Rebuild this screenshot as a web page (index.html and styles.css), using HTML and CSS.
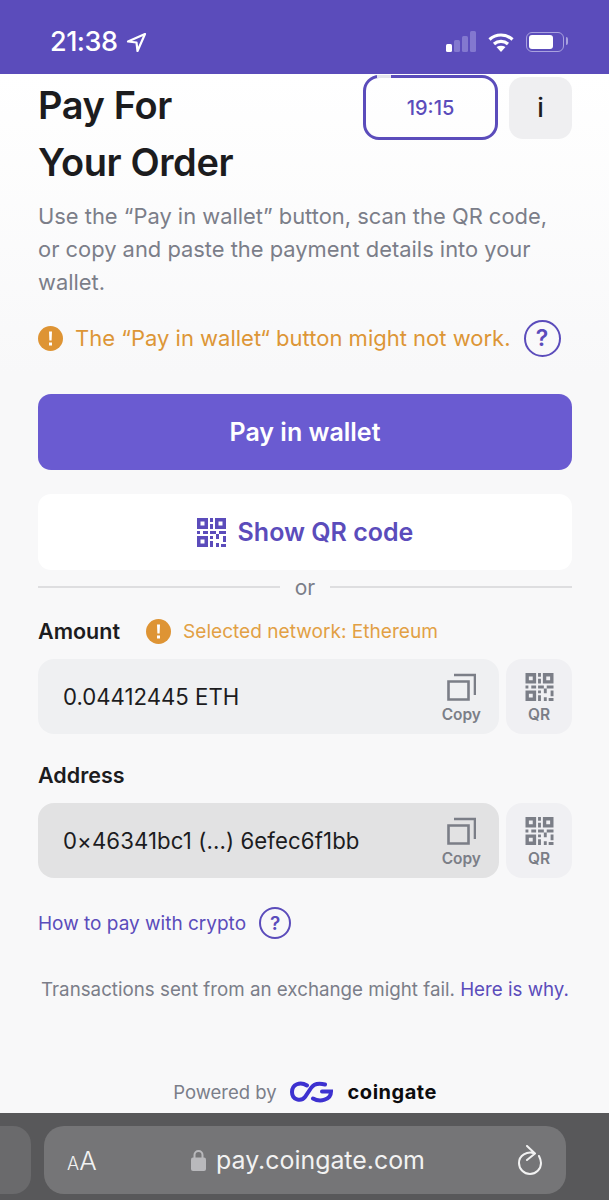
FILE: index.html
```html
<!DOCTYPE html>
<html lang="en">
<head>
    <meta charset="UTF-8">
    <meta name="viewport" content="width=device-width, initial-scale=1.0">
    <title>Pay For Your Order</title>
    <link rel="stylesheet" href="styles.css">
</head>
<body>
    <svg class="defs" width="0" height="0">
        <symbol id="qr" viewBox="0 0 29 29">
            <path fill-rule="evenodd" d="M0 0h11v11H0zM3.500 3.500v4h4v-4zM18 0h11v11H18zM21.500 3.500v4h4v-4zM0 18h11v11H0zM3.500 21.500v4h4v-4z"/>
            <path d="M13 0h3v4h-3zM13 6h3v5h-3zM0 13h3v3H0zM6 13h5v3H6zM13 13h6v3h-6zM22 13h7v3h-7zM13 18h3v3h-3zM19 16h3v5h-3zM26 18h3v6h-3zM13 23h3v6h-3zM19 25h3v4h-3zM24 26h5v3h-5z"/>
        </symbol>
        <symbol id="copy" viewBox="0 0 29 28">
            <path fill="none" stroke="currentColor" stroke-width="2.600" d="M1.500 8.500h20v18h-20zM7 2h21v20"/>
        </symbol>
        <symbol id="alert" viewBox="0 0 25 25">
            <circle cx="12.500" cy="12.500" r="12.500" fill="#de9434"/>
            <path fill="#fff" d="M11 5.500h3l-.4 9h-2.200zM11 16.500h3v3h-3z"/>
        </symbol>
    </svg>

    <header class="status-bar">
        <div class="clock">
            <span>21:38</span>
            <svg class="arrow" width="21" height="21" viewBox="0 0 21 21"><path fill="none" stroke="#fff" stroke-width="2.200" stroke-linejoin="round" d="M19 2 2 9.500l8.500 1 1 8.500z"/></svg>
        </div>
        <div class="status-icons">
            <svg width="30" height="21" viewBox="0 0 30 21">
                <rect x="0" y="13" width="6" height="8" rx="1.500" fill="#fff"/>
                <rect x="8" y="9" width="6" height="12" rx="1.500" fill="#8378cf"/>
                <rect x="16" y="5" width="6" height="16" rx="1.500" fill="#8378cf"/>
                <rect x="24" y="0" width="6" height="21" rx="1.500" fill="#8378cf"/>
            </svg>
            <svg width="26" height="20" viewBox="0 0 26 20">
                <path fill="none" stroke="#fff" stroke-width="3.200" d="M1.500 7.500c6.500-6 16.500-6 23 0M6 12c4-3.500 10-3.500 14 0"/>
                <path fill="#fff" d="m13 20-4.500-5c2.700-1.700 6.300-1.700 9 0z"/>
            </svg>
            <div class="battery"><div class="battery-level"></div></div>
        </div>
    </header>

    <main class="page">
        <div class="top">
            <h1>Pay For<br>Your Order</h1>
            <div class="top-actions">
                <div class="timer">19:15<span class="timer-gap"></span></div>
                <button class="info-btn">i</button>
            </div>
        </div>

        <p class="intro">Use the “Pay in wallet” button, scan the QR code, or copy and paste the payment details into your wallet.</p>

        <div class="warning">
            <svg class="alert" width="25" height="25"><use href="#alert"/></svg>
            <span>The “Pay in wallet“ button might not work.</span>
            <span class="help help-large">?</span>
        </div>

        <button class="btn btn-primary">Pay in wallet</button>
        <button class="btn btn-white">
            <svg class="qr-purple" width="29" height="29"><use href="#qr"/></svg>
            Show QR code
        </button>

        <div class="divider"><span>or</span></div>

        <div class="field-label">
            <strong>Amount</strong>
            <svg class="alert" width="25" height="25"><use href="#alert"/></svg>
            <span class="network">Selected network: Ethereum</span>
        </div>
        <div class="field">
            <div class="field-box">
                <span class="field-value">0.04412445 ETH</span>
                <div class="tool tool-copy">
                    <svg width="29" height="28"><use href="#copy"/></svg>
                    <span>Copy</span>
                </div>
            </div>
            <div class="qr-box tool">
                <svg width="29" height="28"><use href="#qr"/></svg>
                <span>QR</span>
            </div>
        </div>

        <div class="field-label field-label-address">
            <strong>Address</strong>
        </div>
        <div class="field">
            <div class="field-box field-box-active">
                <span class="field-value">0×46341bc1 (...) 6efec6f1bb</span>
                <div class="tool tool-copy">
                    <svg width="29" height="28"><use href="#copy"/></svg>
                    <span>Copy</span>
                </div>
            </div>
            <div class="qr-box tool">
                <svg width="29" height="28"><use href="#qr"/></svg>
                <span>QR</span>
            </div>
        </div>

        <div class="how-to">
            <a href="#">How to pay with crypto</a>
            <span class="help">?</span>
        </div>

        <p class="exchange-note">Transactions sent from an exchange might fail. <a href="#">Here is why.</a></p>

        <div class="powered">
            <span>Powered by</span>
            <svg width="43" height="22" viewBox="0 0 43 22"><path fill="none" stroke="#3d31d0" stroke-width="4" stroke-linecap="round" d="M17 4.500C10 0 2 3.500 2 11c0 8 9 10 13 5l6-9c3-4.500 8-5 14-3.500M23 17.500c7 4 18 1.500 18-7h-9"/></svg>
            <span class="brand">coingate</span>
        </div>
    </main>

    <footer class="toolbar">
        <div class="tab-peek"></div>
        <div class="address-bar">
            <span class="aa"><small>A</small>A</span>
            <div class="url">
                <svg width="15" height="22" viewBox="0 0 15 22"><path fill="none" stroke="#b9b9bc" stroke-width="2" d="M3.500 10V6a4 4 0 0 1 8 0v4"/><rect y="8.500" width="15" height="13.500" rx="2" fill="#b9b9bc"/></svg>
                <span>pay.coingate.com</span>
            </div>
            <svg class="reload" width="25" height="30" viewBox="0 0 25 30"><path fill="none" stroke="#f2f2f2" stroke-width="2" stroke-linecap="round" stroke-linejoin="round" d="M16 8.200C9 6 1 10.500 1 18a11 11 0 0 0 22 0c0-3-1-5-2-7M9 1l8 7.500L9 15"/></svg>
        </div>
    </footer>
</body>
</html>
```

FILE: styles.css
```css
* {
    box-sizing: border-box;
}
body {
    font-family: Inter, "Liberation Sans", sans-serif;
    background-color: #f8f8f9;
    color: #1c1c1e;
    margin: 0;
    padding: 0;
    width: 609px;
    height: 1200px;
    overflow: hidden;
}
button {
    font-family: inherit;
    border: none;
}
a {
    color: #5b4cbb;
    text-decoration: none;
}
.defs {
    position: absolute;
}

/* phone status bar */
.status-bar {
    height: 74px;
    background-color: #5b4cbb;
    padding: 28px 41px 0 50px;
    display: flex;
    justify-content: space-between;
    align-items: flex-start;
    color: #fff;
}
.clock {
    display: flex;
    align-items: center;
    gap: 9px;
    font-size: 27px;
    font-weight: 500;
    line-height: 28px;
    letter-spacing: -0.5px;
}
.status-icons {
    display: flex;
    align-items: center;
    gap: 12px;
    margin-top: 3px;
}
.battery {
    position: relative;
    width: 38px;
    height: 20px;
    border: 1.500px solid #a9a2df;
    border-radius: 6px;
    padding: 2px;
    margin-right: 4px;
}
.battery::after {
    content: "";
    position: absolute;
    top: 4px;
    right: -5px;
    width: 2px;
    height: 8px;
    border-radius: 0 2px 2px 0;
    background-color: #a9a2df;
}
.battery-level {
    width: 24px;
    height: 100%;
    background-color: #fff;
    border-radius: 3px;
}

/* page */
.page {
    height: 1039px;
    padding: 1px 37px 0 38px;
    background: linear-gradient(#fff, #f8f8f9 300px);
}
.top {
    display: flex;
    justify-content: space-between;
    align-items: flex-start;
}
h1 {
    margin: 2px 0 0;
    font-size: 38px;
    font-weight: 600;
    line-height: 57px;
    letter-spacing: -0.4px;
}
.top-actions {
    display: flex;
    align-items: center;
    gap: 11px;
}
.timer {
    position: relative;
    width: 135px;
    height: 65px;
    border: 3px solid #5b4cbb;
    border-radius: 16px;
    display: flex;
    align-items: center;
    justify-content: center;
    color: #5b4cbb;
    font-size: 20px;
    font-weight: 500;
}
.timer-gap {
    position: absolute;
    top: -3px;
    left: 11px;
    width: 14px;
    height: 3px;
    background-color: #e4e4ec;
}
.info-btn {
    width: 63px;
    height: 62px;
    border-radius: 14px;
    background-color: #efeff1;
    color: #1c1c1e;
    font-size: 26px;
    font-weight: 500;
}
.intro {
    margin: 9px 0 0;
    font-size: 21.900px;
    line-height: 33px;
    color: #7b7e89;
}
.warning {
    display: flex;
    align-items: center;
    margin-top: 20px;
    height: 38px;
    color: #dd9636;
    font-size: 22px;
}
.warning .alert {
    margin-right: 12px;
}
.alert {
    flex: none;
}
.help {
    width: 32px;
    height: 32px;
    flex: none;
    border: 2px solid #5b4cbb;
    border-radius: 50%;
    color: #5b4cbb;
    display: flex;
    align-items: center;
    justify-content: center;
    font-size: 19px;
    font-weight: 600;
}
.help-large {
    width: 37px;
    height: 37px;
    margin-left: 13px;
    font-size: 23px;
}
.btn {
    display: flex;
    align-items: center;
    justify-content: center;
    width: 534px;
    height: 76px;
    border-radius: 13px;
    font-size: 25px;
    font-weight: 600;
}
.btn-primary {
    margin-top: 37px;
    background-color: #6a5bd1;
    color: #fff;
}
.btn-white {
    margin-top: 24px;
    gap: 12px;
    background-color: #fff;
    color: #5b4cbb;
}
.qr-purple {
    fill: #5b4cbb;
}
.divider {
    display: flex;
    align-items: center;
    gap: 15px;
    margin-top: 2px;
    height: 30px;
    color: #7b7e89;
    font-size: 21px;
}
.divider::before, .divider::after {
    content: "";
    flex: 1;
    height: 2px;
    background-color: #dedee0;
}
.field-label {
    display: flex;
    align-items: center;
    height: 26px;
    margin-top: 16px;
    font-size: 21.500px;
}
.field-label strong {
    font-weight: 600;
    margin-right: 26px;
}
.field-label-address {
    margin-top: 28px;
}
.network {
    margin-left: 12px;
    font-size: 19.100px;
    color: #e2a044;
}
.field {
    display: flex;
    gap: 7px;
    margin-top: 15px;
}
.field-box {
    width: 461px;
    height: 75px;
    padding: 0 18px 0 25px;
    border-radius: 16px;
    background-color: #eff0f2;
    display: flex;
    align-items: center;
    justify-content: space-between;
}
.field-box-active {
    background-color: #e2e2e3;
}
.field-value {
    font-size: 22.200px;
}
.field-box-active .field-value {
    letter-spacing: 0.1px;
}
.tool {
    display: flex;
    flex-direction: column;
    align-items: center;
    gap: 5px;
    color: #7b7e87;
    fill: #7b7e87;
    font-size: 15.500px;
    font-weight: 600;
    line-height: 18px;
}
.tool-copy {
    margin-top: 4px;
}
.qr-box {
    width: 66px;
    height: 75px;
    padding-top: 4px;
    justify-content: center;
    border-radius: 16px;
    background-color: #f0f0f3;
}
.how-to {
    display: flex;
    align-items: center;
    gap: 13px;
    margin-top: 29px;
    font-size: 19px;
}
.exchange-note {
    margin: 37px 0 0;
    font-size: 18.750px;
    line-height: 28px;
    text-align: center;
    color: #7b7e89;
}
.powered {
    display: flex;
    align-items: center;
    justify-content: center;
    margin-top: 76px;
    height: 24px;
    font-size: 18.500px;
    color: #7b7e89;
}
.powered svg {
    margin: 0 15px 0 13px;
}
.brand {
    font-size: 20px;
    font-weight: 700;
    letter-spacing: 0.5px;
    color: #0c0c0e;
}

/* browser toolbar */
.toolbar {
    height: 87px;
    padding-top: 13px;
    background-color: #58585a;
    display: flex;
    gap: 13px;
}
.tab-peek {
    width: 31px;
    height: 68px;
    background-color: #6a6a6c;
    border-radius: 0 18px 18px 0;
}
.address-bar {
    width: 522px;
    height: 68px;
    background-color: #757577;
    border-radius: 20px;
    padding: 0 23px;
    display: flex;
    align-items: center;
    justify-content: space-between;
    color: #f2f2f2;
}
.aa {
    font-size: 26px;
    width: 31px;
    font-weight: 300;
}
.aa small {
    font-size: 18px;
}
.url {
    display: flex;
    align-items: center;
    gap: 10px;
    font-size: 24.900px;
}
```
